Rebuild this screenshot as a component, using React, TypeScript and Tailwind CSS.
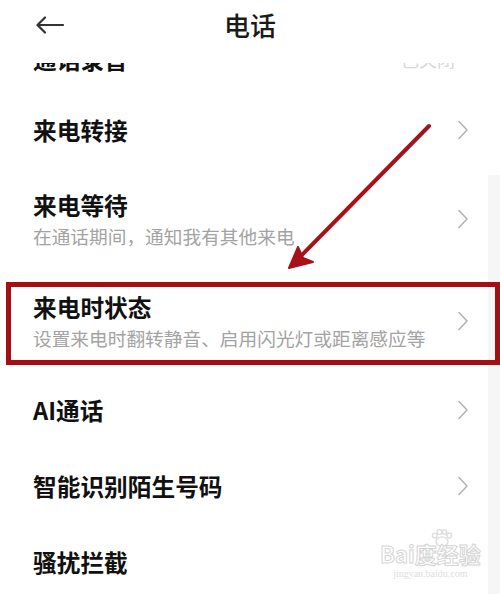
import React from "react";

const font = { fontFamily: '"Noto Sans CJK SC", "Noto Sans", sans-serif' };

function Chevron() {
  return (
    <svg width="12" height="20" viewBox="0 0 12 20" className="shrink-0">
      <path d="M2 1.5 L10 10 L2 18.5" fill="none" stroke="#b4b4b4" strokeWidth="1.6" strokeLinecap="round" strokeLinejoin="round" />
    </svg>
  );
}

function Row({ title, sub, tall, noChevron }: { title: string; sub?: string; tall?: boolean; noChevron?: boolean }) {
  return (
    <div className={`flex items-center justify-between pl-[33px] pr-[31px] ${tall ? "h-[102px]" : "h-[76px]"}`}>
      <div className="flex flex-col">
        <div className="text-[23.7px] leading-[30px] font-semibold text-[#111111]">{title}</div>
        {sub && <div className="text-[18.7px] leading-[26px] mt-[3px] text-[#a3a3a3]">{sub}</div>}
      </div>
      {!noChevron && <Chevron />}
    </div>
  );
}

export default function App() {
  return (
    <div className="relative w-[500px] h-[594px] overflow-hidden bg-white" style={font}>
      {/* header */}
      <div className="relative z-10 h-[63px] bg-white flex items-center">
        <svg width="30" height="18" viewBox="0 0 30 18" className="ml-[35px] mb-[13px]">
          <path d="M28 9 H3 M10 1.5 L2.5 9 L10 16.5" fill="none" stroke="#333" strokeWidth="2.2" strokeLinecap="round" strokeLinejoin="round" />
        </svg>
        <div className="absolute left-0 right-0 top-[8px] text-center text-[26px] leading-[34px] font-medium text-[#1a1a1a]">电话</div>
      </div>

      {/* list */}
      <div className="-mt-[47px] flex flex-col">
        <div className="h-[76px] flex items-center justify-between pl-[33px] pr-[31px] pt-[10px]">
          <div className="text-[23.7px] leading-[30px] font-semibold text-[#111111]">通话录音</div>
          <div className="text-[18px] text-[#d8d8d8] mr-[14px]">已关闭</div>
        </div>
        <Row title="来电转接" />
        <Row title="来电等待" sub="在通话期间，通知我有其他来电" tall />
        <Row title="来电时状态" sub="设置来电时翻转静音、启用闪光灯或距离感应等" tall />
        <Row title="AI通话" />
        <Row title="智能识别陌生号码" />
        <Row title="骚扰拦截" noChevron />
      </div>

      {/* faint right strip */}
      <div className="absolute left-[488px] top-[175px] w-[12px] h-[419px] bg-[#f6f6f6]" />

      {/* red highlight box */}
      <div className="absolute left-[6px] top-[282px] w-[494px] h-[83px] border-[5px] border-[#a50f14]" />

      {/* red arrow */}
      <svg className="absolute left-0 top-0" width="500" height="594" viewBox="0 0 500 594">
        <line x1="429" y1="126" x2="296" y2="261" stroke="#a8101a" strokeWidth="4" strokeLinecap="round" />
        <path d="M289 268 L313 262 L303 258 L298 247 Z" fill="#a8101a" stroke="#a8101a" strokeWidth="2" strokeLinejoin="round" />
      </svg>

      {/* watermark */}
      <div className="absolute left-[380px] top-[528px] flex flex-col items-center opacity-70">
        <svg width="24" height="20" viewBox="0 0 20 16" className="-mb-[6px] ml-[24px]">
          <g fill="none" stroke="#cfcfcf" strokeWidth="1.1">
            <ellipse cx="10" cy="11" rx="5" ry="4" />
            <circle cx="4" cy="6" r="2" />
            <circle cx="8" cy="3" r="2" />
            <circle cx="12" cy="3" r="2" />
            <circle cx="16" cy="6" r="2" />
          </g>
        </svg>
        <div className="text-[22px] leading-[22px] font-bold text-white" style={{ WebkitTextStroke: "1px #c4c4c4" }}>Bai度经验</div>
        <div className="text-[10px] leading-[11px] mt-[4px] text-[#d0d0d0]" style={{ fontFamily: '"Liberation Serif", serif' }}>jingyan.baidu.com</div>
      </div>
    </div>
  );
}
